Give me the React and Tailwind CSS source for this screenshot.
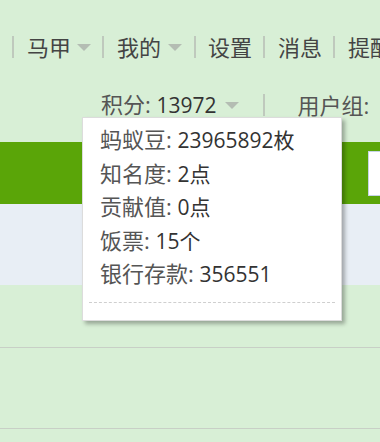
import React from 'react';

const font = { fontFamily: '"Open Sans", "Noto Sans CJK SC", sans-serif' };

const Sep = () => <span className="block shrink-0 w-[2px] h-[22px] bg-[#bfc9bd]" />;
const Arrow = () => (
  <span className="block shrink-0 w-0 h-0 border-l-[7px] border-r-[7px] border-t-[7px] border-l-transparent border-r-transparent border-t-[#b4bdb3]" />
);

const stats = [
  ['蚂蚁豆', '23965892枚'],
  ['知名度', '2点'],
  ['贡献值', '0点'],
  ['饭票', '15个'],
  ['银行存款', '356551'],
];

export default function App() {
  return (
    <div className="relative w-[380px] h-[442px] overflow-hidden bg-[#d8efd6] text-[#333] text-[22px]" style={font}>
      {/* top links */}
      <div className="h-[94px] pt-[36px] pl-[12px]">
        <div className="flex items-center h-[22px] whitespace-nowrap text-[#444]">
          <Sep />
          <span className="ml-[13px] shrink-0">马甲</span>
          <span className="ml-[6px] shrink-0"><Arrow /></span>
          <span className="ml-[11px] shrink-0"><Sep /></span>
          <span className="ml-[13px] shrink-0">我的</span>
          <span className="ml-[7px] shrink-0"><Arrow /></span>
          <span className="ml-[12px] shrink-0"><Sep /></span>
          <span className="ml-[12px] shrink-0">设置</span>
          <span className="ml-[11px] shrink-0"><Sep /></span>
          <span className="ml-[13px] shrink-0">消息</span>
          <span className="ml-[11px] shrink-0"><Sep /></span>
          <span className="ml-[13px] shrink-0">提醒</span>
        </div>
      </div>
      <div className="flex items-center h-[22px] pl-[101px] whitespace-nowrap">
        <span className="shrink-0"><span className="text-[#555]">积分:</span> <span className="text-[21px]">13972</span></span>
        <span className="ml-[8px] shrink-0"><Arrow /></span>
        <span className="ml-[24px] shrink-0"><Sep /></span>
        <span className="ml-[33px] shrink-0 text-[#555]">用户组:</span>
      </div>

      {/* green bar */}
      <div className="mt-[26px] h-[62px] bg-[#5aa508] flex items-center justify-end">
        <div className="w-[12px] h-[45px] bg-white border border-r-0 border-[#c6d4e6]" />
      </div>
      <div className="h-[81px] bg-[#e8eef5]" />
      <div className="h-[62px]" />
      <div className="h-[1px] bg-[#c8cfc6]" />
      <div className="h-[80px]" />
      <div className="h-[1px] bg-[#c8cfc6]" />

      {/* popup */}
      <div className="absolute left-[82px] top-[117px] w-[260px] h-[204px] bg-white border border-[#dcdcdc] shadow-[3px_3px_4px_rgba(0,0,0,0.3)]">
        <div className="pt-[5px] pl-[17px]">
          {stats.map(([k, v]) => (
            <div key={k} className="h-[33.5px] leading-[33.5px] whitespace-nowrap">
              <span className="text-[#555]">{k}:</span> <span className="text-[21px]">{v}</span>
            </div>
          ))}
        </div>
        <div className="mx-[6px] mt-[11px] border-t border-dashed border-[#cfcfcf]" />
      </div>
    </div>
  );
}
